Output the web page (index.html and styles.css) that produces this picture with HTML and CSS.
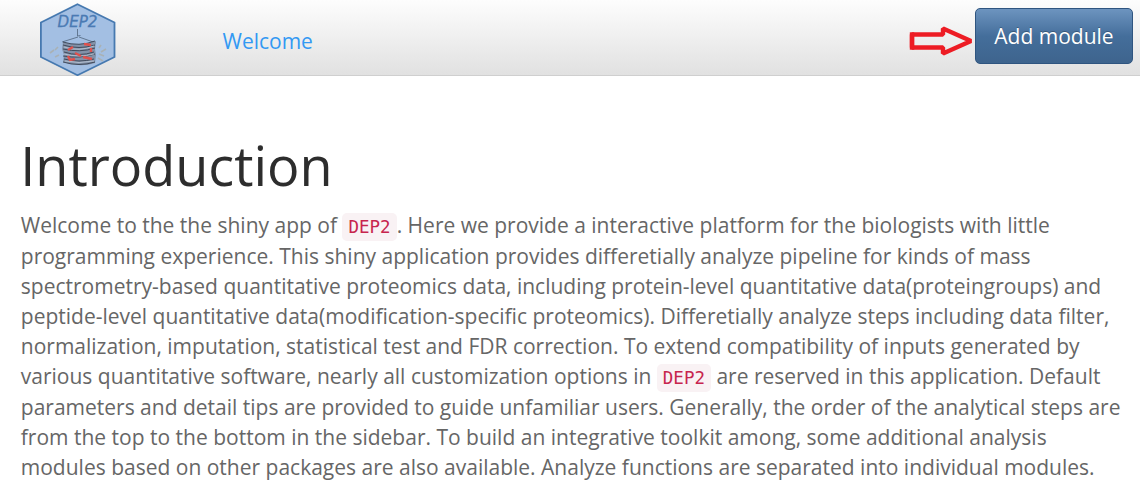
FILE: index.html
```html
<!DOCTYPE html>
<html lang="en">
<head>
<meta charset="utf-8">
<title>DEP2</title>
<link rel="stylesheet" href="styles.css">
</head>
<body>
<header class="navbar">
  <svg class="logo" width="76" height="73" viewBox="0 0 76 73">
    <path d="M37.5 1.2 74.5 19.5V54L37.5 72.2 .9 54V19.5Z" fill="#a3bfe3" stroke="#4679b0" stroke-width="1.8"/>
    <text class="logo-text" x="17.5" y="23.5" textLength="40" lengthAdjust="spacingAndGlyphs">DEP2</text>
    <path d="M37.5 26v7l3-.5M38 34 22 39M39 34l17 6" fill="none" stroke="#50647c" stroke-width=".8"/>
    <path d="M23 39q17 5 33-1l-1 8 1 6-1 8q-15 5-32-1l1-7-2-6Z" fill="#8291a8"/>
    <path d="M23 39q16 5 32-1M23 42q16 5 32 0M23 46q17 4 32-1M24 49q15 5 30 0M23 53q17 3 32-2M24 56q15 4 30 0M23 59q16 5 32 0" fill="none" stroke="#394252" stroke-width=".9"/>
    <path d="M24 44q15 5 30-1M24 51q15 4 30 0M25 58q14 3 29 0" fill="none" stroke="#c9d3e0" stroke-width=".7"/>
    <path d="m28 47 5-3M44 41l7 1M35 50l6 3M43 54l9 2M28 53l2 4 5-1M51 45v4" fill="none" stroke="#e0514d" stroke-width="2.4"/>
    <path d="m18 44-3 3M14 47l-4 3M19 52l-4 2M59 45l2-3M61 49l5-3M59 51l5 2M58 55l5 3" fill="none" stroke="#a9b1b5" stroke-width="1.6"/>
  </svg>
  <a class="nav-link">Welcome</a>
  <svg class="arrow" width="65" height="33" viewBox="0 0 65 33">
    <path d="M3 9.5H34V3.5L62 16 34 28.5V22.5H3Z" fill="none" stroke="#ed1c24" stroke-width="4.4" stroke-linejoin="bevel"/>
    <path d="M3 9.5V22.5" stroke="#ed1c24" stroke-width="4.4" stroke-linecap="square"/>
  </svg>
  <button class="add-button">Add module</button>
</header>
<main class="content">
  <h1 class="title">Introduction</h1>
  <p class="intro">Welcome to the the shiny app of <code class="code">DEP2</code>. Here we provide a interactive platform for the biologists with little<br>
programming experience. This shiny application provides differetially analyze pipeline for kinds of mass<br>
spectrometry-based quantitative proteomics data, including protein-level quantitative data(proteingroups) and<br>
peptide-level quantitative data(modification-specific proteomics). Differetially analyze steps including data filter,<br>
normalization, imputation, statistical test and FDR correction. To extend compatibility of inputs generated by<br>
various quantitative software, nearly all customization options in <code class="code">DEP2</code> are reserved in this application. Default<br>
parameters and detail tips are provided to guide unfamiliar users. Generally, the order of the analytical steps are<br>
from the top to the bottom in the sidebar. To build an integrative toolkit among, some additional analysis<br>
modules based on other packages are also available. Analyze functions are separated into individual modules.</p>
</main>
</body>
</html>
```
FILE: styles.css
```css
* { box-sizing: border-box; }
body {
  margin: 0;
  height: 487px;
  overflow: hidden;
  background: #fff;
  color: #666;
  font-family: "Open Sans", sans-serif;
}
.navbar {
  display: flex;
  align-items: flex-start;
  height: 76px;
  padding: 0 7px 0 39.5px;
  background: linear-gradient(#fdfdfd, #e1e1e1);
  border-bottom: 1px solid #cfcfcf;
}
.logo { margin-top: 3px; flex: none; }
.logo-text {
  fill: #4a7ab3;
  font: italic 15.5px "DejaVu Sans", sans-serif;
  stroke: #4a7ab3;
  stroke-width: .3px;
}
.nav-link {
  margin: 26px auto 0 107px;
  color: #3399f3;
  font-size: 21px;
  line-height: 30px;
}
.arrow { margin: 25px 1px 0 0; flex: none; }
.add-button {
  width: 158px;
  height: 56px;
  margin-top: 8px;
  padding: 0;
  border: 1px solid #2f5580;
  border-radius: 5px;
  background: linear-gradient(#6d94bf, #446e9b 50%, #3e648d);
  color: #fff;
  font: 21px "Open Sans", sans-serif;
  text-shadow: 0 -1px 0 rgba(0, 0, 0, .25);
}
.content { padding: 57px 0 0 20.8px; }
.title {
  margin: 0 0 0 -.6px;
  color: #2d2d2d;
  font-size: 54px;
  font-weight: 400;
  line-height: 64px;
}
.intro {
  margin: 13.3px 0 0;
  font-size: 21px;
  line-height: 30.2px;
  white-space: nowrap;
}
.code {
  padding: 4px 6px;
  border-radius: 5px;
  background: #f9f2f4;
  color: #c7254e;
  font: 17.5px/1 "DejaVu Sans Mono", monospace;
}
```
